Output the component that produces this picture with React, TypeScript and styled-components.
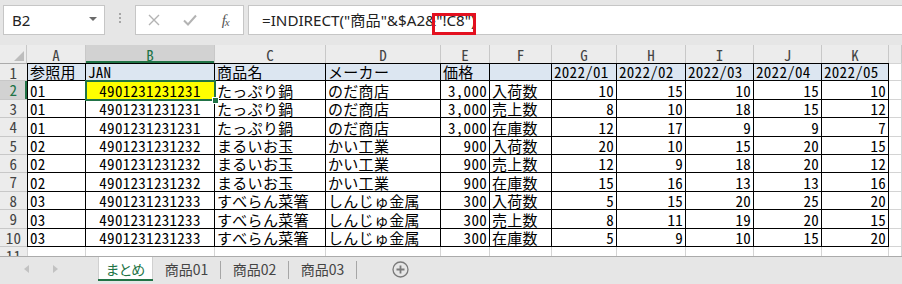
import styled, { createGlobalStyle, css } from "styled-components";

const GREEN = "#217346";
const CELL_FONT = `"Noto Sans Mono CJK JP", "Noto Sans CJK JP", sans-serif`;
const UI_FONT = `"Noto Sans", "Noto Sans CJK JP", sans-serif`;

const GlobalStyle = createGlobalStyle`
  body {
    margin: 0;
    background: #e6e6e6;
  }
`;

const Window = styled.div`
  width: 902px;
  height: 284px;
  overflow: hidden;
  display: flex;
  flex-direction: column;
  background: #e6e6e6;
`;

/* ---------- formula bar ---------- */

const FormulaBar = styled.div`
  display: flex;
  height: 30px;
  margin: 5px 0 10px;
  padding-left: 3px;
`;

const NameBox = styled.div`
  width: 102px;
  box-sizing: border-box;
  background: #fff;
  border: 1px solid #c6c6c6;
  display: flex;
  align-items: center;
  justify-content: space-between;
  padding: 0 7px 0 8px;
  font: 15px ${UI_FONT};
  color: #222;
`;

const Caret = styled.span`
  width: 0;
  height: 0;
  border-left: 4px solid transparent;
  border-right: 4px solid transparent;
  border-top: 4px solid #6a6a6a;
  margin-bottom: 3px;
`;

const Grip = styled.div`
  width: 30px;
  display: flex;
  flex-direction: column;
  align-items: center;
  justify-content: center;
  gap: 2px;
  padding-bottom: 4px;
`;

const GripDot = styled.span`
  width: 2px;
  height: 2px;
  background: #a6a6a6;
`;

const ButtonGroup = styled.div`
  width: 109px;
  box-sizing: border-box;
  background: #fff;
  border: 1px solid #c6c6c6;
  display: flex;
`;

const BarButton = styled.div`
  width: 36px;
  display: flex;
  align-items: center;
  justify-content: center;
  color: #b3b3b3;
`;

const Fx = styled.span`
  font: italic 15px "Liberation Serif", serif;
  color: #555;
  letter-spacing: -1px;
  sub {
    font-size: 11px;
    vertical-align: -1px;
  }
`;

const FormulaInput = styled.div`
  flex: 1;
  margin-left: 4px;
  background: #fff;
  border: 1px solid #c6c6c6;
  border-right: none;
  padding-left: 13px;
  font: 15.2px ${UI_FONT};
  line-height: 28px;
  color: #222;
  white-space: nowrap;
`;

const Marked = styled.span`
  position: relative;
  &::after {
    content: "";
    position: absolute;
    left: -4px;
    right: -5px;
    top: 3px;
    bottom: -5px;
    border: 3px solid #e3101f;
  }
`;

/* ---------- sheet grid ---------- */

const Sheet = styled.div`
  height: 211px;
  overflow: hidden;
  display: grid;
  grid-template-columns: 27px 59px 129px 111px 115px 49px 62px 65px 69px 68px 68px 67px 1fr;
  grid-template-rows: 18px;
  grid-auto-rows: 18.4px;
  font: 15px ${CELL_FONT};
  letter-spacing: 0.3px;
  line-height: 17px;
  background: #fff;
`;

const Corner = styled.div`
  background: #ececec;
  border-right: 1px solid #c8c8c8;
  display: flex;
  align-items: flex-end;
  justify-content: flex-end;
  padding: 0 2px 2px 0;
`;

const ColHead = styled.div<{ $sel?: boolean }>`
  background: ${(p) => (p.$sel ? "#d2d2d2" : "#ececec")};
  color: ${(p) => (p.$sel ? GREEN : "#444")};
  border-right: 1px solid #c8c8c8;
  text-align: center;
  line-height: 19px;
  letter-spacing: 0;
  ${(p) =>
    p.$sel &&
    css`
      box-shadow: inset 0 -2px ${GREEN};
    `}
`;

const RowHead = styled.div<{ $sel?: boolean; $top?: boolean }>`
  box-sizing: border-box;
  background: ${(p) => (p.$sel ? "#d2d2d2" : "#ececec")};
  color: ${(p) => (p.$sel ? GREEN : "#444")};
  border-bottom: 1px solid #c8c8c8;
  border-top: ${(p) => (p.$top ? "1px solid #ababab" : "none")};
  text-align: center;
  ${(p) =>
    p.$sel &&
    css`
      box-shadow: inset -2px 0 ${GREEN};
    `}
`;

type Align = "left" | "right" | "center";

const Cell = styled.div<{
  $data: boolean;
  $blue?: boolean;
  $first?: boolean;
  $top?: boolean;
  $align: Align;
  $sel?: boolean;
}>`
  box-sizing: border-box;
  position: relative;
  border-right: 1px solid ${(p) => (p.$data ? "#000" : "#d4d4d4")};
  border-bottom: 1px solid ${(p) => (p.$data ? "#000" : "#d4d4d4")};
  border-left: ${(p) => (p.$first ? `1px solid ${p.$data ? "#000" : "#d4d4d4"}` : "none")};
  border-top: ${(p) => (p.$top ? `1px solid ${p.$data ? "#000" : "#d4d4d4"}` : "none")};
  background: ${(p) => (p.$sel ? "#ffff00" : p.$blue ? "#dce6f1" : "#fff")};
  color: #000;
  padding: 0 2px;
  white-space: nowrap;
  display: flex;
  align-items: flex-end;
  justify-content: ${(p) =>
    p.$align === "left" ? "flex-start" : p.$align === "right" ? "flex-end" : "center"};
  ${(p) =>
    p.$sel &&
    css`
      &::after {
        content: "";
        position: absolute;
        left: -1px;
        top: -1px;
        right: -2px;
        bottom: -2px;
        border: 2px solid ${GREEN};
        z-index: 1;
      }
      &::before {
        content: "";
        position: absolute;
        right: -5px;
        bottom: -5px;
        width: 5px;
        height: 5px;
        background: ${GREEN};
        border: 1px solid #fff;
        z-index: 2;
      }
    `}
`;

/* ---------- sheet tabs ---------- */

const TabBar = styled.div`
  height: 28px;
  box-sizing: border-box;
  border-top: 1px solid #ababab;
  display: flex;
  padding-bottom: 3px;
  font: 14px "Noto Sans CJK JP", sans-serif;
  font-feature-settings: "palt";
  color: #444;
`;

const Nav = styled.div`
  width: 98px;
  box-sizing: border-box;
  display: flex;
  align-items: center;
  padding-left: 24px;
  gap: 24px;
`;

const Tab = styled.div<{ $active?: boolean }>`
  width: ${(p) => (p.$active ? 55 : 67)}px;
  display: flex;
  align-items: center;
  justify-content: center;
  ${(p) =>
    p.$active &&
    css`
      background: #fff;
      color: ${GREEN};
      box-shadow: inset 0 -2px ${GREEN}, inset 1px 0 #d0d0d0, inset -1px 0 #d0d0d0;
    `}
`;

const TabSep = styled.span`
  width: 1px;
  margin: 4px 0 2px;
  background: #a6a6a6;
`;

const AddSheet = styled.div`
  margin-left: 35px;
  display: flex;
  align-items: center;
`;

const COLS = ["A", "B", "C", "D", "E", "F", "G", "H", "I", "J", "K"];

const HEAD = ["参照用", "JAN", "商品名", "メーカー", "価格", "", "2022/01", "2022/02", "2022/03", "2022/04", "2022/05"];

const PRODUCTS = [
  { id: "01", jan: "4901231231231", name: "たっぷり鍋", maker: "のだ商店", price: "3,000" },
  { id: "02", jan: "4901231231232", name: "まるいお玉", maker: "かい工業", price: "900" },
  { id: "03", jan: "4901231231233", name: "すべらん菜箸", maker: "しんじゅ金属", price: "300" },
];

const KINDS = ["入荷数", "売上数", "在庫数"];

const MONTHS = [
  [10, 15, 10, 15, 10],
  [8, 10, 18, 15, 12],
  [12, 17, 9, 9, 7],
  [20, 10, 15, 20, 15],
  [12, 9, 18, 20, 12],
  [15, 16, 13, 13, 16],
  [5, 15, 20, 25, 20],
  [8, 11, 19, 20, 15],
  [5, 9, 10, 15, 20],
];

const ROWS: string[][] = MONTHS.map((m, i) => {
  const p = PRODUCTS[Math.floor(i / 3)];
  return [p.id, p.jan, p.name, p.maker, p.price, KINDS[i % 3], ...m.map(String)];
});

const alignFor = (col: number): Align => {
  if (col === 1) return "center";
  if (col === 4 || col >= 6) return "right";
  return "left";
};

export default function App() {
  return (
    <Window>
      <GlobalStyle />
      <FormulaBar>
        <NameBox>
          B2
          <Caret />
        </NameBox>
        <Grip>
          <GripDot />
          <GripDot />
          <GripDot />
        </Grip>
        <ButtonGroup>
          <BarButton>
            <svg width="12" height="12" viewBox="0 0 12 12">
              <path d="M1 1 L11 11 M11 1 L1 11" stroke="currentColor" strokeWidth="1.4" />
            </svg>
          </BarButton>
          <BarButton>
            <svg width="14" height="12" viewBox="0 0 14 12">
              <path d="M1 6.5 L5 10.5 L13 1.5" stroke="currentColor" strokeWidth="2" fill="none" />
            </svg>
          </BarButton>
          <BarButton>
            <Fx>
              f<sub>x</sub>
            </Fx>
          </BarButton>
        </ButtonGroup>
        <FormulaInput>
          =INDIRECT("商品"&amp;$A2&amp;<Marked>"!C8"</Marked>)
        </FormulaInput>
      </FormulaBar>

      <Sheet>
        <Corner>
          <svg width="10" height="10" viewBox="0 0 10 10">
            <polygon points="10,0 10,10 0,10" fill="#bdbdbd" />
          </svg>
        </Corner>
        {COLS.map((c) => (
          <ColHead key={c} $sel={c === "B"}>
            {c}
          </ColHead>
        ))}
        <ColHead />

        <RowHead $top>1</RowHead>
        {HEAD.map((h, i) => (
          <Cell key={i} $data $blue $top $first={i === 0} $align="left">
            {h}
          </Cell>
        ))}
        <Cell $data={false} $top $align="left" />

        {ROWS.map((row, r) => (
          <RowFragment key={r} index={r + 2} cells={row} />
        ))}

        <RowHead>11</RowHead>
        {COLS.map((c, i) => (
          <Cell key={c} $data={false} $first={i === 0} $align="left" />
        ))}
        <Cell $data={false} $align="left" />
      </Sheet>

      <TabBar>
        <Nav>
          <svg width="5" height="8" viewBox="0 0 5 8">
            <polygon points="5,0 5,8 0,4" fill="#c2c2c2" />
          </svg>
          <svg width="5" height="8" viewBox="0 0 5 8">
            <polygon points="0,0 0,8 5,4" fill="#c2c2c2" />
          </svg>
        </Nav>
        <Tab $active>まとめ</Tab>
        <Tab>商品01</Tab>
        <TabSep />
        <Tab>商品02</Tab>
        <TabSep />
        <Tab>商品03</Tab>
        <TabSep />
        <AddSheet>
          <svg width="17" height="17" viewBox="0 0 17 17">
            <circle cx="8.5" cy="8.5" r="7.5" fill="none" stroke="#7a7a7a" strokeWidth="1.3" />
            <path d="M8.5 4.5 V12.5 M4.5 8.5 H12.5" stroke="#7a7a7a" strokeWidth="1.8" />
          </svg>
        </AddSheet>
      </TabBar>
    </Window>
  );
}

function RowFragment({ index, cells }: { index: number; cells: string[] }) {
  const selected = index === 2;
  return (
    <>
      <RowHead $sel={selected}>{index}</RowHead>
      {cells.map((v, i) => (
        <Cell key={i} $data $first={i === 0} $align={alignFor(i)} $sel={selected && i === 1}>
          {v}
        </Cell>
      ))}
      <Cell $data={false} $align="left" />
    </>
  );
}
